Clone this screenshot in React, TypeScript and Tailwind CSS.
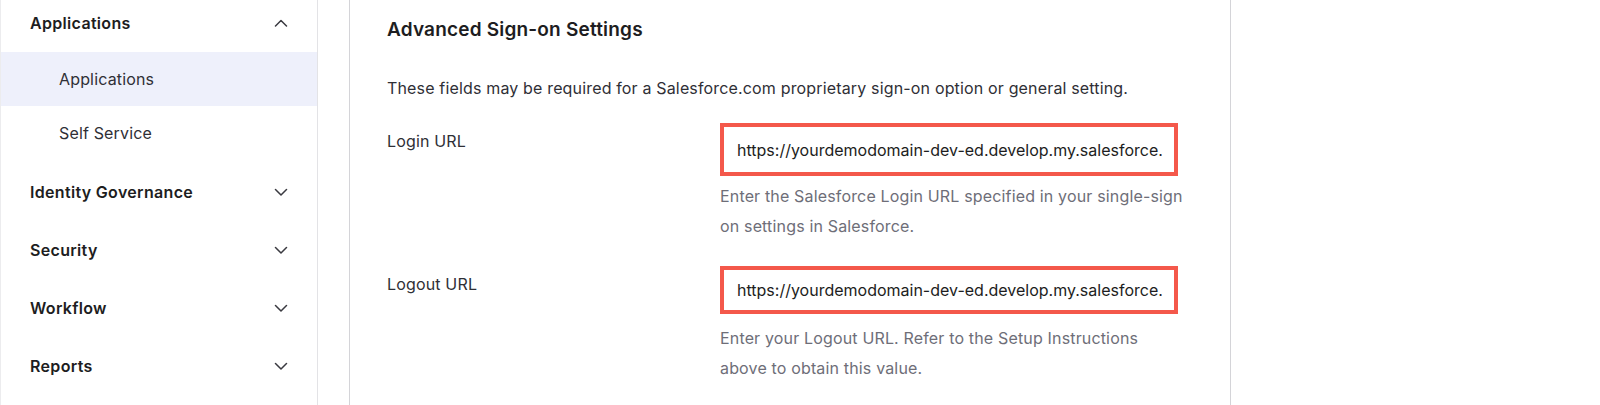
const font = { fontFamily: "Inter, 'Noto Sans', sans-serif" };

const Chevron = ({ up }: { up?: boolean }) => (
  <svg width="14" height="8" viewBox="0 0 14 8" fill="none" stroke="#3a3a40" strokeWidth={1.5} strokeLinecap="round" strokeLinejoin="round">
    {up ? <path d="M1.5 7L7 1.5L12.5 7" /> : <path d="M1.5 1.5L7 7L12.5 1.5" />}
  </svg>
);

const navGroups = ["Identity Governance", "Security", "Workflow", "Reports"];

interface UrlFieldProps {
  label: string;
  value: string;
  help: string[];
  boxHeight: string;
  labelPad: string;
  helpGap: string;
}

const UrlField = ({ label, value, help, boxHeight, labelPad, helpGap }: UrlFieldProps) => (
  <div className="flex">
    <div className={`w-[333px] text-[16px] leading-6 text-[#2f2f36] tracking-[0.01em] ${labelPad}`}>{label}</div>
    <div className="w-[458px]">
      <div className={`border-4 border-[#f4584b] bg-white flex items-center pl-[13px] pr-[12px] ${boxHeight}`}>
        <span className="block w-full text-[16px] text-[#1d1d21] whitespace-nowrap overflow-hidden">{value}</span>
      </div>
      <div className={`text-[16px] leading-[30px] text-[#6e6e78] tracking-[0.01em] whitespace-nowrap ${helpGap}`}>
        {help.map((h, i) => (
          <div key={i}>{h}</div>
        ))}
      </div>
    </div>
  </div>
);

const App = () => {
  const url = "https://yourdemodomain-dev-ed.develop.my.salesforce.com";
  return (
    <div className="w-[1600px] h-[405px] bg-white flex overflow-hidden" style={font}>
      {/* Sidebar */}
      <div className="w-[318px] flex-shrink-0 border-r border-[#e3e3e6] border-l border-l-[#ececee]">
        <div className="h-[46px] flex items-center justify-between pl-[29px] pr-[29px]">
          <span className="text-[16px] font-semibold text-[#1d1d21] tracking-[0.02em]">Applications</span>
          <Chevron up />
        </div>
        <div className="mt-[6px] h-[54px] bg-[#eef0fb] flex items-center pl-[58px] text-[16px] text-[#2f2f36] tracking-[0.01em]">
          Applications
        </div>
        <div className="h-[54px] flex items-center pl-[58px] text-[16px] text-[#2f2f36] tracking-[0.01em]">Self Service</div>
        <div className="mt-[3px]">
          {navGroups.map((g) => (
            <div key={g} className="h-[58px] flex items-center justify-between pl-[29px] pr-[29px]">
              <span className="text-[16px] font-semibold text-[#1d1d21] tracking-[0.02em]">{g}</span>
              <Chevron />
            </div>
          ))}
        </div>
      </div>

      {/* Main */}
      <div className="flex-1 pl-[31px]">
        <div className="w-[882px] h-full border-l border-r border-[#d4d4d8] pl-[37px]">
          <h2 className="m-0 pt-[18px] text-[19px] leading-6 font-semibold text-[#1d1d21] tracking-[0.01em]">Advanced Sign-on Settings</h2>
          <p className="m-0 mt-[34px] text-[16px] leading-6 text-[#2f2f36] tracking-[0.01em]">
            These fields may be required for a Salesforce.com proprietary sign-on option or general setting.
          </p>
          <div className="mt-[23px]">
            <UrlField
              label="Login URL"
              value={url}
              boxHeight="h-[53px]"
              labelPad="pt-[6px]"
              helpGap="mt-[5px]"
              help={["Enter the Salesforce Login URL specified in your single-sign", "on settings in Salesforce."]}
            />
          </div>
          <div className="mt-[25px]">
            <UrlField
              label="Logout URL"
              value={url}
              boxHeight="h-[48px]"
              labelPad="pt-[6px]"
              helpGap="mt-[9px]"
              help={["Enter your Logout URL. Refer to the Setup Instructions", "above to obtain this value."]}
            />
          </div>
        </div>
      </div>
    </div>
  );
};

export default App;
